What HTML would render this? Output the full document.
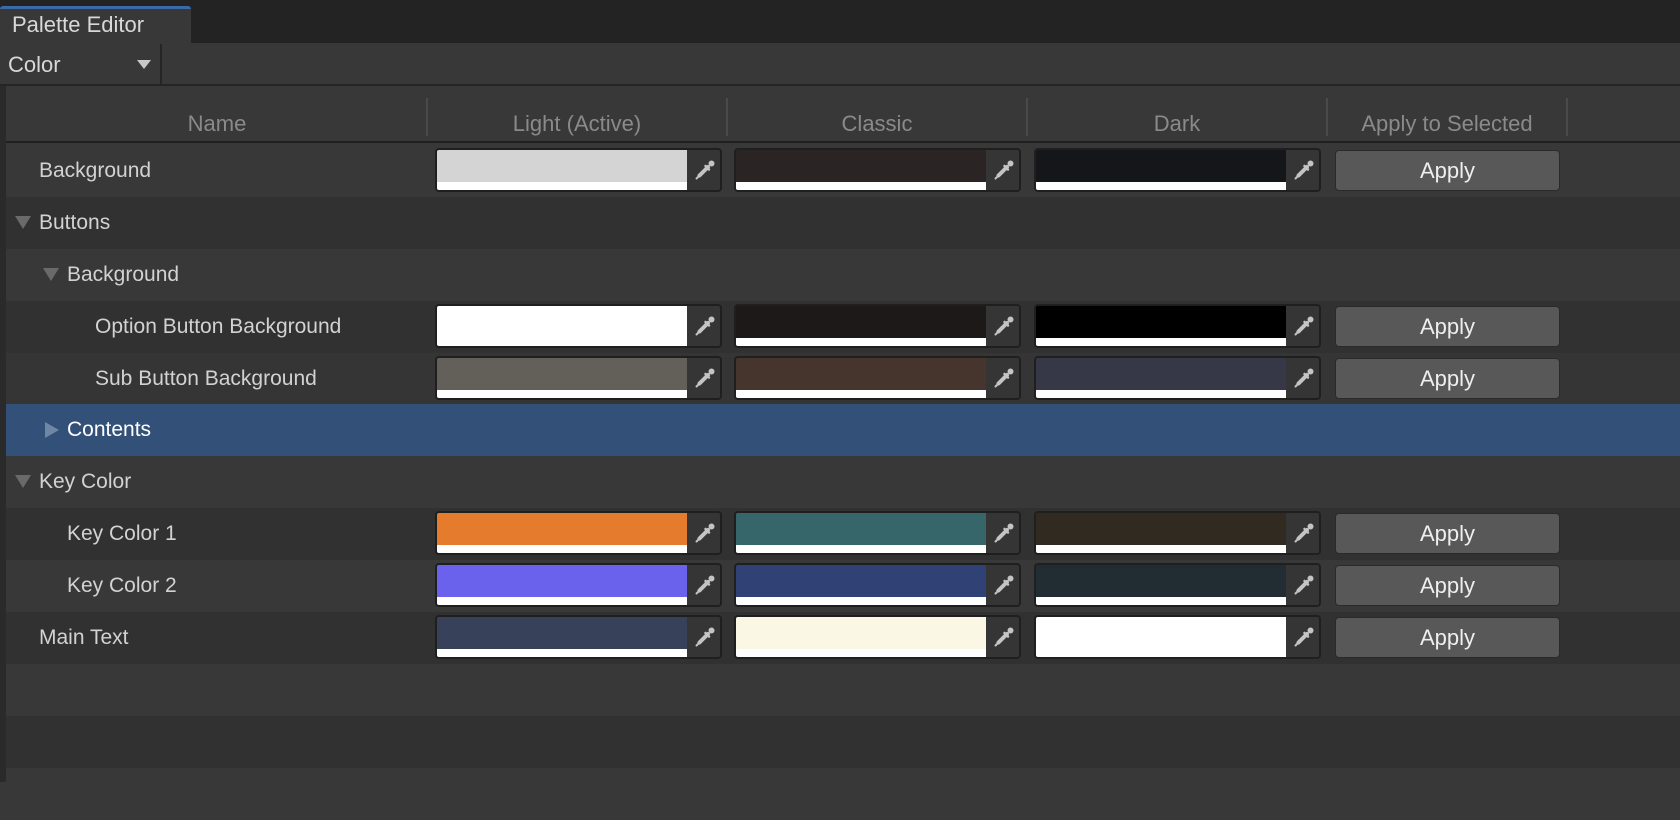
<!DOCTYPE html>
<html><head><meta charset="utf-8"><style>
*{margin:0;padding:0;box-sizing:border-box}
body{width:1680px;height:782px;background:#383838;font-family:"Liberation Sans",sans-serif;position:relative;overflow:hidden;color:#d2d2d2}
.a{position:absolute}
.row{position:absolute;left:6px;width:1674px;height:52px}
.lbl{position:absolute;top:0;line-height:52px;font-size:21px;color:#d2d2d2}
.tri{position:absolute;width:0;height:0}
.field{position:absolute;top:3px;width:287px;height:44px;border:2px solid #1f1f1f;border-radius:4px;background:#2a2a2a;overflow:hidden}
.sw{position:absolute;left:0;top:0;width:250px;height:32px}
.wb{position:absolute;left:0;top:32px;width:250px;height:8px;background:#fff}
.ed{position:absolute;left:250px;top:0;width:35px;height:40px;background:#353535}
.btn{position:absolute;top:5px;left:1329px;width:225px;height:41px;background:#585858;border:1px solid #2a2a2a;border-radius:4px;color:#eee;font-size:22px;text-align:center;line-height:39px}
.hd{position:absolute;top:98px;font-size:22px;color:#8a8a8a;line-height:52px;text-align:center}
.sep{position:absolute;top:98px;width:2px;height:38px;background:#4a4a4a}
</style></head><body>
<div class="a" style="left:0;top:0;width:1680px;height:43px;background:#232323"></div>
<div class="a" style="left:0;top:6px;width:191px;height:37px;background:#383838;border-top:3px solid #3a6aa8;border-radius:3px 3px 0 0"></div>
<div class="a" style="left:12px;top:8px;font-size:22px;line-height:34px;color:#d8d8d8">Palette Editor</div>
<div class="a" style="left:0;top:43px;width:1680px;height:43px;background:#383838;border-bottom:2px solid #252525"></div>
<div class="a" style="left:160px;top:44px;width:2px;height:40px;background:#252525"></div>
<div class="a" style="left:8px;top:46px;font-size:22px;line-height:38px;color:#d8d8d8">Color</div>
<div class="tri a" style="left:137px;top:60px;border-left:7px solid transparent;border-right:7px solid transparent;border-top:9px solid #c8c8c8"></div>
<div class="a" style="left:0;top:86px;width:6px;height:696px;background:#2a2a2a"></div>
<div class="a" style="left:6px;top:90px;width:1674px;height:53px;background:#383838;border-bottom:2px solid #202020"></div>
<div class="hd" style="left:6px;width:422px">Name</div>
<div class="sep" style="left:426px"></div>
<div class="hd" style="left:428px;width:298px">Light (Active)</div>
<div class="sep" style="left:726px"></div>
<div class="hd" style="left:728px;width:298px">Classic</div>
<div class="sep" style="left:1026px"></div>
<div class="hd" style="left:1028px;width:298px">Dark</div>
<div class="sep" style="left:1326px"></div>
<div class="hd" style="left:1328px;width:238px">Apply to Selected</div>
<div class="sep" style="left:1566px"></div>

<svg width="0" height="0" style="position:absolute"><defs><g id="dp"><circle cx="18.5" cy="5.5" r="3" fill="#c4c4c4"/><line x1="12.5" y1="8" x2="16" y2="11.5" stroke="#c4c4c4" stroke-width="2.5" stroke-linecap="round"/><line x1="15" y1="9" x2="6.5" y2="17.5" stroke="#c4c4c4" stroke-width="4" stroke-linecap="round"/><line x1="6" y1="18" x2="3.5" y2="20.5" stroke="#c4c4c4" stroke-width="2" stroke-linecap="round"/></g></defs></svg>

<div class="row" style="top:145px;background:#383838"><div class="lbl" style="left:33px">Background</div>
<div class="field" style="left:429px"><div class="sw" style="background:#d4d4d4"></div><div class="wb"></div><div class="ed"><svg width="35" height="40" viewBox="-6 -8 35 40"><use href="#dp"/></svg></div></div>
<div class="field" style="left:728px"><div class="sw" style="background:#2a2524"></div><div class="wb"></div><div class="ed"><svg width="35" height="40" viewBox="-6 -8 35 40"><use href="#dp"/></svg></div></div>
<div class="field" style="left:1028px"><div class="sw" style="background:#15161a"></div><div class="wb"></div><div class="ed"><svg width="35" height="40" viewBox="-6 -8 35 40"><use href="#dp"/></svg></div></div>
<div class="btn">Apply</div></div>

<div class="row" style="top:197px;background:#313131"><div class="tri" style="left:9px;top:19px;border-left:8px solid transparent;border-right:8px solid transparent;border-top:13px solid #6a6a6a"></div><div class="lbl" style="left:33px">Buttons</div></div>

<div class="row" style="top:249px;background:#383838"><div class="tri" style="left:37px;top:19px;border-left:8px solid transparent;border-right:8px solid transparent;border-top:13px solid #6a6a6a"></div><div class="lbl" style="left:61px">Background</div></div>

<div class="row" style="top:301px;background:#313131"><div class="lbl" style="left:89px">Option Button Background</div>
<div class="field" style="left:429px"><div class="sw" style="background:#ffffff"></div><div class="wb"></div><div class="ed"><svg width="35" height="40" viewBox="-6 -8 35 40"><use href="#dp"/></svg></div></div>
<div class="field" style="left:728px"><div class="sw" style="background:#1c1918"></div><div class="wb"></div><div class="ed"><svg width="35" height="40" viewBox="-6 -8 35 40"><use href="#dp"/></svg></div></div>
<div class="field" style="left:1028px"><div class="sw" style="background:#000"></div><div class="wb"></div><div class="ed"><svg width="35" height="40" viewBox="-6 -8 35 40"><use href="#dp"/></svg></div></div>
<div class="btn">Apply</div></div>

<div class="row" style="top:353px;background:#353535"><div class="lbl" style="left:89px">Sub Button Background</div>
<div class="field" style="left:429px"><div class="sw" style="background:#636059"></div><div class="wb"></div><div class="ed"><svg width="35" height="40" viewBox="-6 -8 35 40"><use href="#dp"/></svg></div></div>
<div class="field" style="left:728px"><div class="sw" style="background:#45352d"></div><div class="wb"></div><div class="ed"><svg width="35" height="40" viewBox="-6 -8 35 40"><use href="#dp"/></svg></div></div>
<div class="field" style="left:1028px"><div class="sw" style="background:#373847"></div><div class="wb"></div><div class="ed"><svg width="35" height="40" viewBox="-6 -8 35 40"><use href="#dp"/></svg></div></div>
<div class="btn">Apply</div></div>

<div class="row" style="top:404px;background:#325078"><div class="tri" style="left:39px;top:18px;border-top:8px solid transparent;border-bottom:8px solid transparent;border-left:14px solid #6f86a4"></div><div class="lbl" style="left:61px;color:#fff">Contents</div></div>

<div class="row" style="top:456px;background:#383838"><div class="tri" style="left:9px;top:19px;border-left:8px solid transparent;border-right:8px solid transparent;border-top:13px solid #6a6a6a"></div><div class="lbl" style="left:33px">Key Color</div></div>

<div class="row" style="top:508px;background:#313131"><div class="lbl" style="left:61px">Key Color 1</div>
<div class="field" style="left:429px"><div class="sw" style="background:#e57b2c"></div><div class="wb"></div><div class="ed"><svg width="35" height="40" viewBox="-6 -8 35 40"><use href="#dp"/></svg></div></div>
<div class="field" style="left:728px"><div class="sw" style="background:#37666a"></div><div class="wb"></div><div class="ed"><svg width="35" height="40" viewBox="-6 -8 35 40"><use href="#dp"/></svg></div></div>
<div class="field" style="left:1028px"><div class="sw" style="background:#312a20"></div><div class="wb"></div><div class="ed"><svg width="35" height="40" viewBox="-6 -8 35 40"><use href="#dp"/></svg></div></div>
<div class="btn">Apply</div></div>

<div class="row" style="top:560px;background:#383838"><div class="lbl" style="left:61px">Key Color 2</div>
<div class="field" style="left:429px"><div class="sw" style="background:#6a62ec"></div><div class="wb"></div><div class="ed"><svg width="35" height="40" viewBox="-6 -8 35 40"><use href="#dp"/></svg></div></div>
<div class="field" style="left:728px"><div class="sw" style="background:#2f4175"></div><div class="wb"></div><div class="ed"><svg width="35" height="40" viewBox="-6 -8 35 40"><use href="#dp"/></svg></div></div>
<div class="field" style="left:1028px"><div class="sw" style="background:#212c33"></div><div class="wb"></div><div class="ed"><svg width="35" height="40" viewBox="-6 -8 35 40"><use href="#dp"/></svg></div></div>
<div class="btn">Apply</div></div>

<div class="row" style="top:612px;background:#313131"><div class="lbl" style="left:33px">Main Text</div>
<div class="field" style="left:429px"><div class="sw" style="background:#37425a"></div><div class="wb"></div><div class="ed"><svg width="35" height="40" viewBox="-6 -8 35 40"><use href="#dp"/></svg></div></div>
<div class="field" style="left:728px"><div class="sw" style="background:#faf8e5"></div><div class="wb"></div><div class="ed"><svg width="35" height="40" viewBox="-6 -8 35 40"><use href="#dp"/></svg></div></div>
<div class="field" style="left:1028px"><div class="sw" style="background:#fff"></div><div class="wb"></div><div class="ed"><svg width="35" height="40" viewBox="-6 -8 35 40"><use href="#dp"/></svg></div></div>
<div class="btn">Apply</div></div>

<div class="row" style="top:664px;background:#383838"></div>
<div class="row" style="top:716px;background:#313131"></div>
<div class="row" style="top:768px;background:#383838"></div>
</body></html>
